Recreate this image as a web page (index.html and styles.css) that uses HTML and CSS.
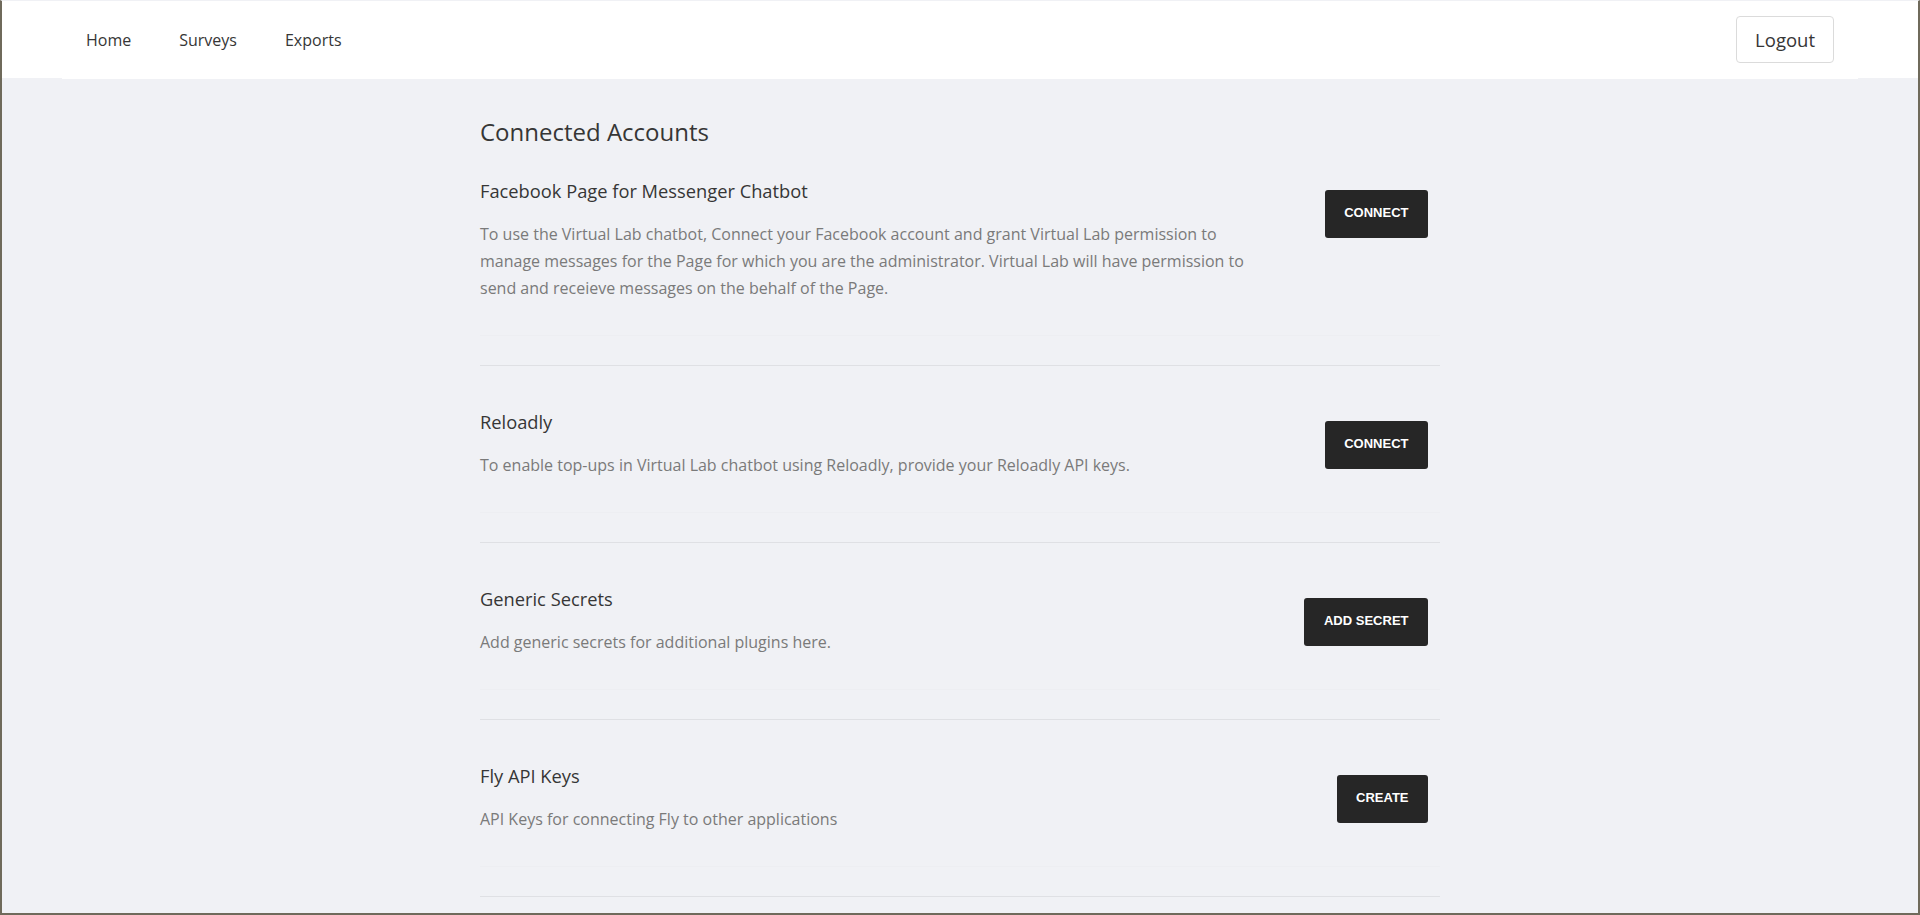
FILE: index.html
```html
<!DOCTYPE html>
<html lang="en">
<head>
<meta charset="utf-8">
<title>Connected Accounts</title>
<link rel="stylesheet" href="styles.css">
</head>
<body>
<div class="frame">
  <header class="navbar">
    <div class="navbar-inner">
      <nav class="nav-links">
        <a class="nav-link" href="#">Home</a>
        <a class="nav-link" href="#">Surveys</a>
        <a class="nav-link" href="#">Exports</a>
      </nav>
      <button class="logout">Logout</button>
    </div>
  </header>
  <main class="page">
    <h1 class="page-title">Connected Accounts</h1>

    <section class="account">
      <div class="account-text">
        <h2 class="account-title">Facebook Page for Messenger Chatbot</h2>
        <p class="account-desc">To use the Virtual Lab chatbot, Connect your Facebook account and grant Virtual Lab permission to manage messages for the Page for which you are the administrator. Virtual Lab will have permission to send and receieve messages on the behalf of the Page.</p>
      </div>
      <div class="account-action"><button class="btn-dark">CONNECT</button></div>
    </section>
    <hr class="divider">

    <section class="account">
      <div class="account-text">
        <h2 class="account-title">Reloadly</h2>
        <p class="account-desc">To enable top-ups in Virtual Lab chatbot using Reloadly, provide your Reloadly API keys.</p>
      </div>
      <div class="account-action"><button class="btn-dark">CONNECT</button></div>
    </section>
    <hr class="divider">

    <section class="account">
      <div class="account-text">
        <h2 class="account-title">Generic Secrets</h2>
        <p class="account-desc">Add generic secrets for additional plugins here.</p>
      </div>
      <div class="account-action"><button class="btn-dark">ADD SECRET</button></div>
    </section>
    <hr class="divider">

    <section class="account">
      <div class="account-text">
        <h2 class="account-title">Fly API Keys</h2>
        <p class="account-desc">API Keys for connecting Fly to other applications</p>
      </div>
      <div class="account-action"><button class="btn-dark">CREATE</button></div>
    </section>
    <hr class="divider">
  </main>
</div>
</body>
</html>
```
FILE: styles.css
```css
* { box-sizing: border-box; }

html, body {
  margin: 0;
  padding: 0;
  height: 100%;
}

body {
  font-family: "Open Sans", "Noto Sans", sans-serif;
  color: #363636;
  background: #6f6a5b;
  overflow: hidden;
}

.frame {
  height: 915px;
  border-left: 2px solid #6f6a5b;
  border-right: 2px solid #6f6a5b;
  border-bottom: 2px solid #6f6a5b;
  border-top: 1px solid transparent;
  background: #f0f1f5;
  position: relative;
  overflow: hidden;
}

.frame::before {
  content: "";
  position: absolute;
  left: 0;
  right: 0;
  top: -1px;
  height: 1px;
  background: linear-gradient(90deg, #6f6a5b 0%, #a8687a 3%, #b58270 7%, #c09278 40%, #bb8a74 90%, #c0509a 97%, #7a52c4 100%);
}

.navbar {
  background: #ffffff;
  height: 77px;
  padding: 0 60px;
}

.navbar-inner {
  height: 78px;
  background: #ffffff;
  display: flex;
  align-items: center;
  justify-content: space-between;
}

.nav-links {
  display: flex;
  align-items: center;
}

.nav-link {
  font-size: 16px;
  color: #363636;
  text-decoration: none;
  padding: 8px 24px;
  line-height: 24px;
}

.logout {
  font-family: "Open Sans", "Noto Sans", sans-serif;
  font-size: 18.5px;
  color: #363636;
  background: #ffffff;
  border: 1px solid #dbdbdb;
  border-radius: 4px;
  height: 47px;
  padding: 0 18px;
  margin-right: 24px;
  margin-top: -1px;
}

.page {
  width: 960px;
  margin: 0 auto;
  padding-top: 38px;
}

.page-title {
  font-size: 24px;
  font-weight: 400;
  line-height: 32px;
  margin: 0 0 28px;
  color: #363636;
}

.account {
  display: flex;
  justify-content: space-between;
  align-items: flex-start;
  padding-bottom: 33px;
  border-bottom: 1px solid #edeef2;
}

.account-text {
  width: 775px;
}

.account-title {
  font-size: 18.3px;
  font-weight: 400;
  line-height: 30px;
  margin: 0 0 15px;
  color: #363636;
}

.account-desc {
  font-size: 16px;
  line-height: 27px;
  margin: 0;
  color: #7a7a7a;
}

.account-action {
  padding: 14px 12px 0 0;
}

.btn-dark {
  font-family: "Liberation Sans", Arial, sans-serif;
  font-weight: 700;
  font-size: 13px;
  line-height: 46px;
  color: #ffffff;
  background: #262626;
  border: none;
  border-radius: 3px;
  height: 48px;
  padding: 0 19.5px 2px;
}

.divider {
  border: none;
  height: 1px;
  background: #dfe0e4;
  margin: 29px 0 41px;
}
```
